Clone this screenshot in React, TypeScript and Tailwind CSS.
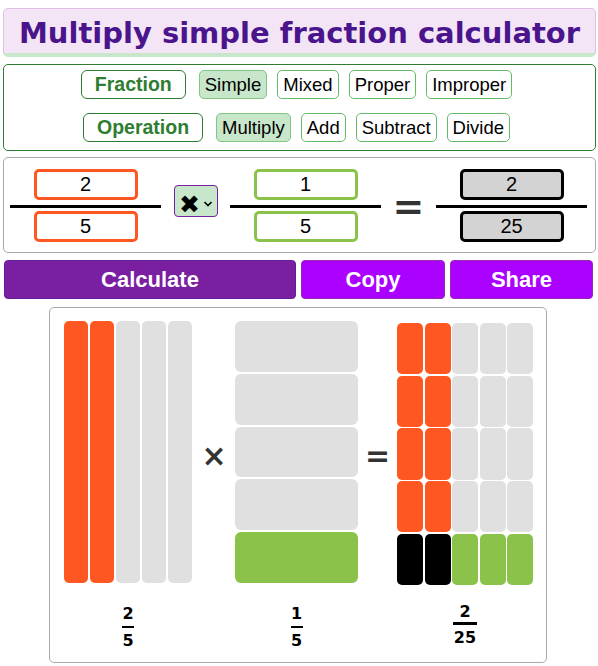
import React from "react";

const orange = "bg-[#ff5722]";
const gray = "bg-[#e0e0e0]";
const green = "bg-[#8bc34a]";

function OptionButton({ label, active }: { label: string; active?: boolean }) {
  return (
    <div
      className={`h-[29px] flex items-center px-[5px] rounded-[5px] border text-[18.5px] font-['Liberation_Sans',Arial,sans-serif] text-black ${
        active ? "bg-[#c8e6c9] border-[#81c784]" : "bg-white border-[#66bb6a]"
      }`}
    >
      {label}
    </div>
  );
}

function GroupLabel({ label }: { label: string }) {
  return (
    <div className="h-[29px] flex items-center px-[13px] mr-[3px] rounded-[6px] border border-[#2e7d32] text-[19.5px] font-bold text-[#2e7d32] font-['Liberation_Sans',Arial,sans-serif]">
      {label}
    </div>
  );
}

function FractionInputs({ top, bottom, box }: { top: string; bottom: string; box: string }) {
  const cls = `w-[104px] h-[31px] rounded-[5px] border-[3px] text-center text-[20px] leading-none text-black outline-none font-['Liberation_Sans',Arial,sans-serif] ${box}`;
  return (
    <div className="w-[151px] flex flex-col items-center">
      <input readOnly value={top} className={cls} />
      <div className="mt-[5px] h-[3px] w-full bg-black" />
      <input readOnly value={bottom} className={`mt-[3px] ${cls}`} />
    </div>
  );
}

function Label({ n, d, thick }: { n: string; d: string; thick?: boolean }) {
  return (
    <div className="inline-flex flex-col items-center text-[16px] font-bold leading-[19px] text-black font-['DejaVu_Sans',Verdana,sans-serif]">
      <span>{n}</span>
      <div className={`${thick ? "h-[3px] w-[24px] mt-[1px]" : "h-[2px] w-[12px] mt-[3px]"} bg-black mb-[3px]`} />
      <span>{d}</span>
    </div>
  );
}

export default function App() {
  const tabs = ["Simple", "Mixed", "Proper", "Improper"];
  const ops = ["Multiply", "Add", "Subtract", "Divide"];
  const leftBars = [orange, orange, gray, gray, gray];
  const midRows = [gray, gray, gray, gray, green];
  const grid: string[] = [];
  for (let r = 0; r < 5; r++) {
    for (let c = 0; c < 5; c++) {
      if (r < 4) grid.push(c < 2 ? orange : gray);
      else grid.push(c < 2 ? "bg-black" : green);
    }
  }

  return (
    <div className="w-[598px] min-h-[666px] bg-white pt-[8px]">
      {/* title */}
      <div className="ml-[3px] w-[593px] rounded-[5px] border border-[#e1bee7] border-b-[4px] border-b-[#c8e6c9] bg-[#f3e5f5] pt-[7px] pb-[3px] text-center">
        <h1 className="text-[29px] leading-[34px] font-bold text-[#4a148c] font-['DejaVu_Sans',Verdana,sans-serif]">
          Multiply simple fraction calculator
        </h1>
      </div>

      {/* options */}
      <div className="ml-[3px] mt-[7px] w-[593px] rounded-[5px] border border-[#2e7d32] pt-[5px] pb-[8px] flex flex-col gap-[14px]">
        <div className="flex justify-center gap-[10px] pr-[6px]">
          <GroupLabel label="Fraction" />
          {tabs.map((t) => (
            <OptionButton key={t} label={t} active={t === "Simple"} />
          ))}
        </div>
        <div className="flex justify-center gap-[10px] pr-[6px]">
          <GroupLabel label="Operation" />
          {ops.map((t) => (
            <OptionButton key={t} label={t} active={t === "Multiply"} />
          ))}
        </div>
      </div>

      {/* inputs */}
      <div className="ml-[3px] mt-[6px] w-[593px] rounded-[5px] border border-[#aaaaaa] pt-[11px] pb-[10px] pl-[6px] flex items-start">
        <FractionInputs top="2" bottom="5" box="border-[#ff5722] bg-white" />
        <div className="ml-[13px] mt-[16px] w-[44px] h-[32px] rounded-[4px] border border-[#7b1fa2] bg-[#c8e6c9] flex items-center pl-[4px]">
          <span className="text-[25px] leading-none text-black font-['DejaVu_Sans',sans-serif] mt-[6px]">✖</span>
          <svg width="10" height="6" viewBox="0 0 10 6" className="ml-[3px] mt-[6px]">
            <polyline points="1.5,1 5,4.5 8.5,1" fill="none" stroke="black" strokeWidth="1.6" />
          </svg>
        </div>
        <div className="ml-[12px]">
          <FractionInputs top="1" bottom="5" box="border-[#8bc34a] bg-white" />
        </div>
        <div className="w-[55px] h-[73px] flex items-center justify-center">
          <span className="text-[38px] leading-none font-bold text-[#333333] font-['DejaVu_Sans',sans-serif]">=</span>
        </div>
        <FractionInputs top="2" bottom="25" box="border-black bg-[#d3d3d3]" />
      </div>

      {/* buttons */}
      <div className="ml-[4px] mt-[7px] flex gap-[5px] font-['Liberation_Sans',Arial,sans-serif] text-[22px] font-bold text-white">
        <button className="w-[292px] h-[39px] rounded-[4px] bg-[#7b1fa2] border border-[#6a1b9a]">Calculate</button>
        <button className="w-[144px] h-[39px] rounded-[4px] bg-[#aa00ff] border border-[#9c27b0]">Copy</button>
        <button className="w-[143px] h-[39px] rounded-[4px] bg-[#aa00ff] border border-[#9c27b0]">Share</button>
      </div>

      {/* visual */}
      <div className="ml-[49px] mt-[8px] w-[498px] rounded-[5px] border border-[#aaaaaa] pt-[13px] pb-[12px] pl-[13px]">
        <div className="flex items-start">
          <div className="flex w-[130px] h-[262px]">
            {leftBars.map((b, i) => (
              <div key={i} className={`w-[24px] mx-[1px] h-full rounded-[5px] ${b}`} />
            ))}
          </div>
          <div className="w-[42px] h-[262px] flex items-center justify-center pt-[8px]">
            <span className="text-[30px] leading-none font-bold text-[#333333] font-['DejaVu_Sans',sans-serif]">×</span>
          </div>
          <div className="w-[123px] h-[262px] flex flex-col gap-[2px]">
            {midRows.map((b, i) => (
              <div key={i} className={`flex-1 rounded-[6px] ${b}`} />
            ))}
          </div>
          <div className="w-[39px] h-[262px] flex items-center justify-center pt-[8px]">
            <span className="text-[30px] leading-none font-bold text-[#333333] font-['DejaVu_Sans',sans-serif]">=</span>
          </div>
          <div className="mt-[2px] w-[136px] h-[262px] grid grid-cols-5 grid-rows-5 gap-[1.5px]">
            {grid.map((b, i) => (
              <div key={i} className={`rounded-[5px] ${b}`} />
            ))}
          </div>
        </div>
        <div className="flex items-start mt-[19px]">
          <div className="w-[130px] flex justify-center">
            <Label n="2" d="5" />
          </div>
          <div className="w-[42px]" />
          <div className="w-[123px] flex justify-center">
            <Label n="1" d="5" />
          </div>
          <div className="w-[39px]" />
          <div className="w-[136px] flex justify-center -mt-[2px]">
            <Label n="2" d="25" thick />
          </div>
        </div>
      </div>
    </div>
  );
}
